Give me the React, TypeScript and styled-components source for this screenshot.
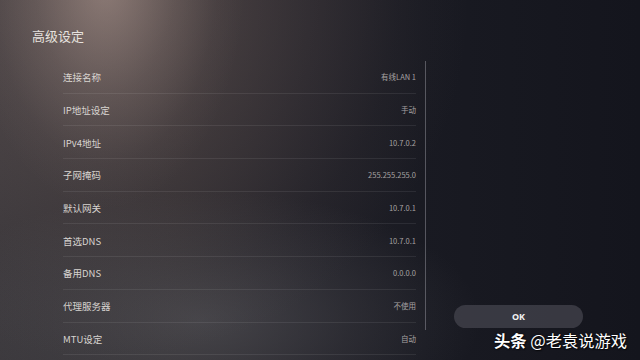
import * as React from "react";
import styled, { createGlobalStyle } from "styled-components";

const GlobalStyle = createGlobalStyle`
  html, body {
    margin: 0;
    padding: 0;
    background: #15161e;
  }
  * {
    box-sizing: border-box;
  }
`;

const Screen = styled.div`
  position: relative;
  width: 640px;
  height: 360px;
  overflow: hidden;
  font-family: "Noto Sans CJK SC", "Noto Sans", sans-serif;
  color: #dcd8d4;
  background:
    radial-gradient(ellipse 140px 230px at 105px -20px, rgba(195, 170, 160, 0.5), rgba(195, 170, 160, 0.18) 50%, rgba(195, 170, 160, 0.04) 80%, rgba(195, 170, 160, 0) 100%),
    radial-gradient(ellipse 360px 360px at 110px 0px, rgba(120, 102, 98, 0.5), rgba(120, 102, 98, 0.22) 50%, rgba(120, 102, 98, 0.06) 80%, rgba(120, 102, 98, 0) 100%),
    radial-gradient(ellipse 280px 130px at 200px 320px, rgba(95, 95, 100, 0.5), rgba(95, 95, 100, 0.2) 55%, rgba(95, 95, 100, 0) 100%),
    linear-gradient(90deg, #39363a 0%, #2e2b2f 28%, #222128 48%, #191a22 66%, #14151d 100%);
`;

const Title = styled.h1`
  margin: 0;
  padding: 27px 0 0 32px;
  height: 61px;
  font-size: 13px;
  font-weight: 400;
  line-height: 18px;
  color: #e6e2de;
`;

const Content = styled.div`
  display: flex;
  align-items: flex-start;
  padding-left: 63px;
`;

const List = styled.div`
  width: 353px;
  display: flex;
  flex-direction: column;
`;

const Row = styled.div`
  height: 32.7px;
  display: flex;
  align-items: center;
  justify-content: space-between;
  border-bottom: 1px solid rgba(255, 255, 255, 0.08);
`;

const Label = styled.span`
  font-size: 9.5px;
  color: #d8d4d0;
  padding-top: 1px;
`;

const Value = styled.span`
  font-size: 7.5px;
  color: #a6a2a2;
`;

const ScrollTrack = styled.div`
  width: 1px;
  height: 269px;
  margin-left: 9px;
  background: rgba(200, 200, 210, 0.35);
`;

const Side = styled.div`
  height: 267px;
  margin-left: 28px;
  display: flex;
  align-items: flex-end;
`;

const OkButton = styled.button`
  width: 129px;
  height: 23px;
  border: none;
  border-radius: 12px;
  background: rgba(68, 68, 78, 0.75);
  color: #f2f2f2;
  font-family: "Noto Sans", "Noto Sans CJK SC", sans-serif;
  font-weight: 700;
  font-size: 9px;
  padding: 0;
`;

const Watermark = styled.div`
  position: absolute;
  left: 494px;
  top: 329px;
  font-size: 16.3px;
  line-height: 22px;
  color: #ffffff;
  white-space: nowrap;
  text-shadow: 0 0 2px rgba(0, 0, 0, 0.8), 1px 1px 1px rgba(0, 0, 0, 0.6);
  b {
    font-weight: 700;
  }
`;

const rows: [string, string][] = [
  ["连接名称", "有线LAN 1"],
  ["IP地址设定", "手动"],
  ["IPv4地址", "10.7.0.2"],
  ["子网掩码", "255.255.255.0"],
  ["默认网关", "10.7.0.1"],
  ["首选DNS", "10.7.0.1"],
  ["备用DNS", "0.0.0.0"],
  ["代理服务器", "不使用"],
  ["MTU设定", "自动"],
];

export default function App() {
  return (
    <>
      <GlobalStyle />
      <Screen>
        <Title>高级设定</Title>
        <Content>
          <List>
            {rows.map(([label, value]) => (
              <Row key={label}>
                <Label>{label}</Label>
                <Value>{value}</Value>
              </Row>
            ))}
          </List>
          <ScrollTrack />
          <Side>
            <OkButton>OK</OkButton>
          </Side>
        </Content>
        <Watermark>
          <b>头条</b> @老袁说游戏
        </Watermark>
      </Screen>
    </>
  );
}
